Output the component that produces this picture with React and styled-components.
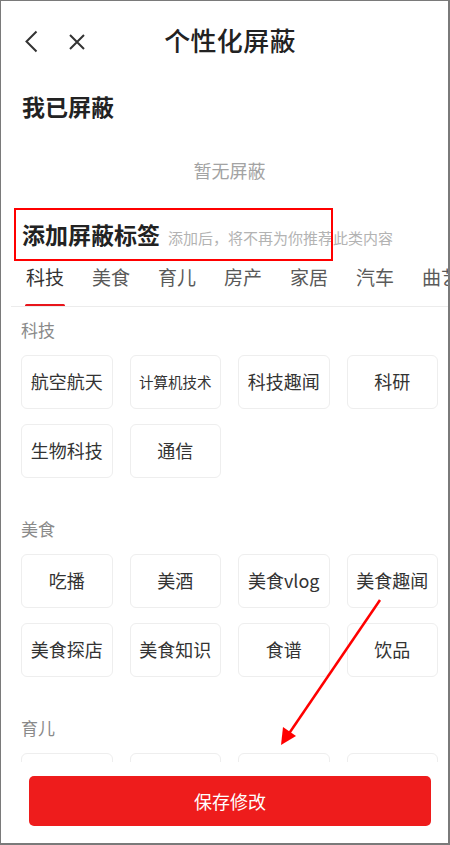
import React from "react";
import styled, { createGlobalStyle } from "styled-components";

const GlobalStyle = createGlobalStyle`
  html, body {
    margin: 0;
    padding: 0;
    background: #fff;
  }
  body {
    font-family: "Noto Sans CJK SC", "Noto Sans", sans-serif;
  }
`;

const categories = [
  {
    name: "科技",
    tags: [
      { label: "航空航天" },
      { label: "计算机技术", small: true },
      { label: "科技趣闻" },
      { label: "科研" },
      { label: "生物科技" },
      { label: "通信" },
    ],
  },
  {
    name: "美食",
    tags: [
      { label: "吃播" },
      { label: "美酒" },
      { label: "美食vlog" },
      { label: "美食趣闻" },
      { label: "美食探店" },
      { label: "美食知识" },
      { label: "食谱" },
      { label: "饮品" },
    ],
  },
  {
    name: "育儿",
    tags: [{ label: "" }, { label: "" }, { label: "" }, { label: "" }],
  },
];

const tabs = ["科技", "美食", "育儿", "房产", "家居", "汽车", "曲艺", "体育"];

const Frame = styled.div`
  position: relative;
  box-sizing: border-box;
  width: 450px;
  height: 845px;
  border-style: solid;
  border-color: #7a7a7a;
  border-width: 1px 2px 2px 1px;
  display: flex;
  flex-direction: column;
  overflow: hidden;
  background: #fff;
`;

const Header = styled.header`
  flex: none;
  height: 81px;
  box-sizing: border-box;
  display: grid;
  grid-template-columns: 1fr auto 1fr;
  align-items: center;
  padding: 0 13px 3px 24px;
`;

const HeaderIcons = styled.div`
  display: flex;
  align-items: center;
  gap: 31px;
  padding-top: 3px;
`;

const IconButton = styled.button`
  border: 0;
  background: none;
  padding: 0;
  display: flex;
  align-items: center;
  cursor: pointer;
`;

const Title = styled.h1`
  margin: 0;
  font-size: 26px;
  font-weight: 500;
  color: #222;
  line-height: 34px;
  letter-spacing: 0.3px;
`;

const Body = styled.div`
  flex: 1;
  overflow: hidden;
  display: flex;
  flex-direction: column;
`;

const BlockedSection = styled.section`
  padding: 11px 0 0 21px;
`;

const SectionTitle = styled.h2`
  margin: 0;
  font-size: 23px;
  font-weight: 700;
  line-height: 26px;
  color: #222;
`;

const Empty = styled.p`
  margin: 39px 0 0;
  font-size: 18px;
  line-height: 24px;
  color: #a3a3a3;
  text-align: center;
  padding-left: 10px;
`;

const AddRow = styled.div`
  margin-top: 39px;
  padding-left: 21px;
  display: flex;
  align-items: baseline;
  gap: 8px;
  white-space: nowrap;
`;

const Hint = styled.span`
  font-size: 15px;
  color: #b3b3b3;
`;

const TabBar = styled.nav`
  flex: none;
  margin-left: 10px;
  padding-left: 15px;
  display: flex;
  gap: 28px;
  border-bottom: 1px solid #ececec;
  white-space: nowrap;
  overflow: hidden;
`;

const Tab = styled.span`
  position: relative;
  flex: none;
  padding: 17px 0;
  font-size: 19px;
  line-height: 24px;
  color: ${(p) => (p.$active ? "#333" : "#5a5a5a")};

  &::after {
    content: "";
    display: ${(p) => (p.$active ? "block" : "none")};
    position: absolute;
    left: -1px;
    right: -1px;
    bottom: -1px;
    height: 3px;
    border-radius: 2px;
    background: #e8151b;
  }
`;

const Categories = styled.div`
  padding: 12px 10px 0 20px;
  display: flex;
  flex-direction: column;
  gap: 40px;
`;

const CategoryName = styled.h3`
  margin: 0;
  font-size: 17px;
  font-weight: 400;
  line-height: 22px;
  color: #8a8a8a;
`;

const TagGrid = styled.div`
  margin-top: 14px;
  display: grid;
  grid-template-columns: repeat(4, 1fr);
  column-gap: 17px;
  row-gap: 15px;
`;

const Tag = styled.button`
  height: 54px;
  border: 1px solid #eeeeee;
  border-radius: 6px;
  background: #fff;
  font-family: inherit;
  font-size: ${(p) => (p.$small ? "14.5px" : "18px")};
  color: #333;
  padding: 0 0 2px;
  white-space: nowrap;
  cursor: pointer;
`;

const Footer = styled.footer`
  flex: none;
  height: 81px;
  padding: 14px 17px 0 28px;
  box-sizing: border-box;
  background: #fff;
`;

const SaveButton = styled.button`
  width: 100%;
  height: 50px;
  border: 0;
  border-radius: 5px;
  background: #ee1c1c;
  color: #fff;
  font-family: inherit;
  font-size: 18px;
  cursor: pointer;
`;

const Highlight = styled.div`
  position: absolute;
  left: 13px;
  top: 207px;
  width: 315px;
  height: 49px;
  border: 2px solid #f00;
  pointer-events: none;
`;

const ArrowLayer = styled.svg`
  position: absolute;
  left: 0;
  top: 0;
  pointer-events: none;
`;

const BackIcon = () => (
  <svg width="13" height="23" viewBox="0 0 13 23">
    <polyline points="11.5,1.5 1.5,11.5 11.5,21.5" fill="none" stroke="#333" strokeWidth="2" />
  </svg>
);

const CloseIcon = () => (
  <svg width="16" height="16" viewBox="0 0 16 16">
    <path d="M1 1 L15 15 M15 1 L1 15" stroke="#333" strokeWidth="2" />
  </svg>
);

export default function App() {
  return (
    <>
      <GlobalStyle />
      <Frame>
        <Header>
          <HeaderIcons>
            <IconButton aria-label="返回">
              <BackIcon />
            </IconButton>
            <IconButton aria-label="关闭">
              <CloseIcon />
            </IconButton>
          </HeaderIcons>
          <Title>个性化屏蔽</Title>
          <span />
        </Header>

        <Body>
          <BlockedSection>
            <SectionTitle>我已屏蔽</SectionTitle>
          </BlockedSection>
          <Empty>暂无屏蔽</Empty>

          <AddRow>
            <SectionTitle>添加屏蔽标签</SectionTitle>
            <Hint>添加后，将不再为你推荐此类内容</Hint>
          </AddRow>

          <TabBar>
            {tabs.map((t, i) => (
              <Tab key={t} $active={i === 0}>
                {t}
              </Tab>
            ))}
          </TabBar>

          <Categories>
            {categories.map((c) => (
              <section key={c.name}>
                <CategoryName>{c.name}</CategoryName>
                <TagGrid>
                  {c.tags.map((tag, i) => (
                    <Tag key={i} $small={tag.small}>
                      {tag.label}
                    </Tag>
                  ))}
                </TagGrid>
              </section>
            ))}
          </Categories>
        </Body>

        <Footer>
          <SaveButton>保存修改</SaveButton>
        </Footer>

        <Highlight />
        <ArrowLayer width="450" height="845" viewBox="0 0 450 845">
          <line x1="379" y1="599" x2="287" y2="734" stroke="#f00" strokeWidth="2.5" />
          <polygon points="280,744 282,726 295,735" fill="#f00" />
        </ArrowLayer>
      </Frame>
    </>
  );
}
